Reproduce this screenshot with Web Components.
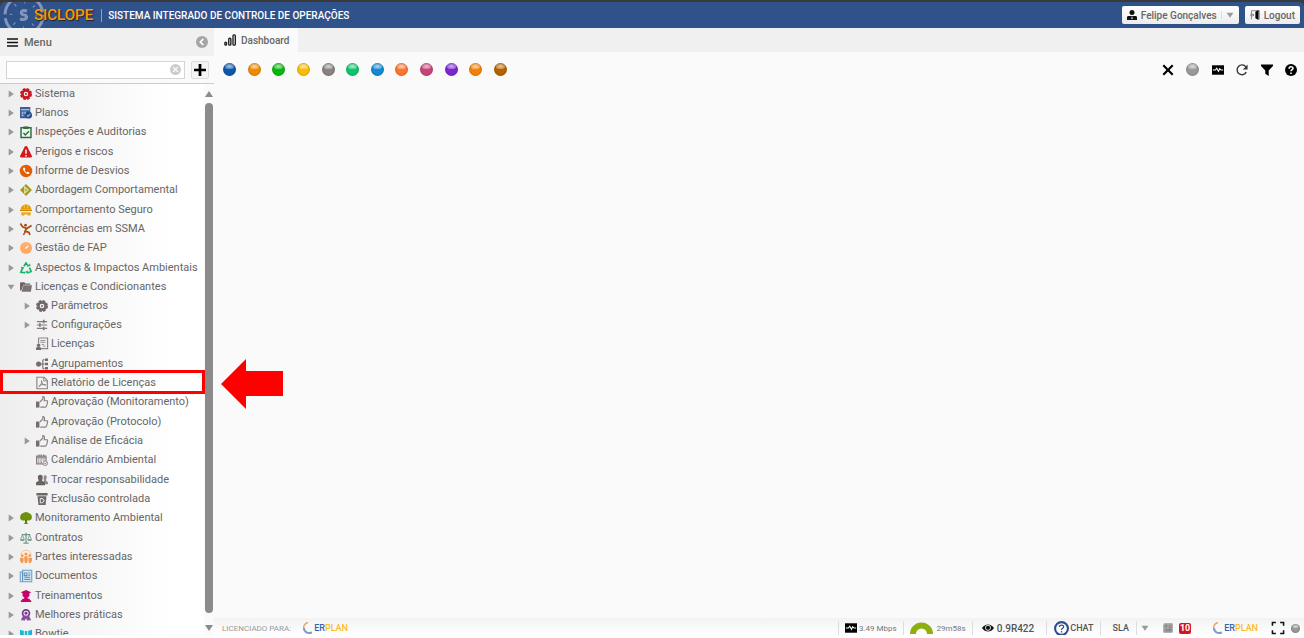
<!DOCTYPE html>
<html lang="pt-BR">
<head>
<meta charset="utf-8">
<title>SICLOPE</title>
<style>
  html, body { height: 100%; }
  body {
    margin: 0;
    font-family: Roboto, "Liberation Sans", sans-serif;
    font-size: 11px;
    color: #666;
    background: #fff;
  }
</style>
</head>
<body>
<app-shell></app-shell>

<script>
const icons = {
  menu: '<path d="M0 2.500h14M0 7h14M0 11.500h14" stroke="#111" stroke-width="2"/>',
  back: '<circle cx="7" cy="7" r="7" fill="#a5a5a5"/><path d="M8.500 3.500L5 7l3.500 3.500" fill="none" stroke="#fff" stroke-width="2"/>',
  clear: '<circle cx="7" cy="7" r="7" fill="#ccc"/><path d="M4 4l6 6M10 4l-6 6" stroke="#fff" stroke-width="1.500"/>',
  plus: '<path d="M7 0v14M0 7h14" stroke="#000" stroke-width="3.200"/>',
  chart: '<g fill="none" stroke="#222" stroke-width="1.600"><rect x="1" y="9.500" width="2" height="3.500" rx="1"/><rect x="5.500" y="5" width="2.500" height="8" rx="1"/><rect x="10.500" y="1" width="2.700" height="12" rx="1"/></g>',
  gear: '<circle cx="7" cy="7" r="4.200" fill="none" stroke="currentColor" stroke-width="3"/><circle cx="7" cy="7" r="6" fill="none" stroke="currentColor" stroke-width="2" stroke-dasharray="3.200 1.512"/><circle cx="7" cy="7" r="1.200" fill="currentColor"/>',
  plans: '<path d="M0 0h12v7H8v6H0z" fill="#3b5f96"/><path d="M1 3.200h10M2 6h2M5 6h2M2 8h2M5 8h2M2 10h2" stroke="#c9d8ee" stroke-width="1.200"/><circle cx="10" cy="9.500" r="4" fill="#274b86"/><path d="M8 9.500l1.500 1.500L12 8" fill="none" stroke="#9db8dd" stroke-width="1.200"/>',
  clipboard: '<path d="M1.200 2h11.600v11.300H1.200z" fill="#eef6ef" stroke="#2c6e3c" stroke-width="1.700"/><path d="M4 .5h6v3H4z" fill="#2c6e3c"/><path d="M4 8l2.200 2.500L10.500 6" fill="none" stroke="#2c6e3c" stroke-width="1.700"/>',
  danger: '<path d="M7 0c.8 0 1.200.5 1.500 1l5.300 10.500c.5 1 0 2-1.200 2H1.400c-1.200 0-1.700-1-1.200-2L5.500 1C5.800.5 6.200 0 7 0z" fill="#d0191b"/><path d="M7 4v5M7 10.500v1.700" stroke="#fff" stroke-width="1.700"/>',
  phone: '<circle cx="7" cy="7" r="7.300" fill="#e65c00"/><path d="M4 3.200c-1 1-.5 3 1.700 5.300S10 11 11 10l-.2-1.300-2-.8-1 .8C6.500 8 6 7.300 5.500 6.200l.8-.9-.8-2z" fill="#fff"/>',
  diamond: '<path d="M7 0l7 7-7 7-7-7z" fill="#a39a25"/><path d="M5.500 3.500v7l4-3.500z" fill="none" stroke="#e8e4b0" stroke-width="1.300"/>',
  helmet: '<path d="M1 6c0-3 2.500-5.500 6-5.500s6 2.500 6 5.500z" fill="#e39a00"/><path d="M0 6.500h14v1.700H0z" fill="#c98400"/><path d="M5 1v4M9 1v4" stroke="#f7cf75"/><path d="M1.500 9.500h11v3c-1 1.500-3.500 1.500-4.500-.5H6c-1 2-3.500 2-4.500.5z" fill="#eda91b"/>',
  fall: '<circle cx="6.500" cy="2.500" r="1.600" fill="#a84b0c"/><path d="M.5 .5l2.500 4 5 2L13.500 3M7.500 6L6 9.500l4.500 1.500 1 3" fill="none" stroke="#a84b0c" stroke-width="2"/><path d="M6.500 9.500L4 14" fill="none" stroke="#a84b0c" stroke-width="1.700"/>',
  gauge: '<circle cx="7" cy="7" r="7" fill="#ffaa67"/><path d="M6.500 7.500L9.500 4.500" stroke="#fff" stroke-width="1.500"/><path d="M3 4.500a5 5 0 0 1 8 0" fill="none" stroke="#ffd0a8" stroke-dasharray="1 1"/>',
  recycle: '<path d="M4.500 5L7 1.200 9.500 5M11 6.500l2 4.500-4 1.500M6 12.500l-5-.5 2-5" fill="none" stroke="#17b26a" stroke-width="2"/><path d="M8 5h4V1.800zM9 9.500v4.500l-3-2.200zM1 5.500l4 .7-2 3z" fill="#17b26a"/>',
  folder: '<path d="M0 3c0-1 .5-1.500 1.300-1.500H5L6.500 3H12v1.500H4L1.500 11H0z" fill="#6d6565"/><path d="M4 5h10l-1.300 7.500H1.800z" fill="#7b7272"/>',
  sliders: '<path d="M1 3h12M1 7h12M1 11h12" stroke="#837a7a" stroke-width="1.300"/><path d="M9 1v4M4.500 5v4M9 9v4" stroke="#837a7a" stroke-width="2"/>',
  license: '<path d="M3 0h10.500v12.500H6M3 0v6" fill="none" stroke="#8e8585" stroke-width="1.400"/><path d="M5 3h6M5 5h6M6.500 7.500h3" stroke="#8e8585"/><circle cx="3" cy="8.500" r="2" fill="#756c6c"/><path d="M0 14v-2.500l3-1.500 3 1.500V14z" fill="#756c6c"/><path d="M8 9.500h3" stroke="#8e8585"/>',
  group: '<circle cx="3" cy="7" r="3" fill="#756c6c"/><path d="M5 7h5M8 2v10.500M8 2h2M8 12.500h2" stroke="#756c6c" stroke-width="1.300" fill="none"/><path d="M10.500.5h3.500v3h-3.500zM10.500 5.500h3.500v3h-3.500zM10.500 10.500h3.500v3h-3.500z" fill="#756c6c"/>',
  pdf: '<path d="M1 .3h8.500L13.200 4v9.700H1z" fill="none" stroke="#8a8181" stroke-width="1.300"/><path d="M9 .5v4h4M3 11.500c3-1.500 4-5.500 3.500-7.500M6.500 4.500c0 3 2 5 5 5M3.500 10.500c2-1.500 5-2 8-1.500" fill="none" stroke="#8a8181" stroke-width="1.100"/>',
  thumb: '<path d="M0 6.500h4v7H0z" fill="#756c6c"/><path d="M4.500 7L8 3.500V.7c1.800 0 2.500 1.800 1.500 4.800H13c.7.500.7 1.500.2 2 .3.700.2 1.500-.4 2 .2.700 0 1.400-.6 1.800 0 1-.5 1.700-1.500 1.700H5" fill="none" stroke="#8a8181" stroke-width="1.300"/>',
  calendar: '<path d="M.7 2.500h11v9H.7z" fill="none" stroke="#857b7b" stroke-width="1.300"/><path d="M1 4.500h11M3.500.5v3M6 .5v3M9 .5v3M2 7h2M5 7h2M8 7h2M2 9.500h2M5 9.500h2" stroke="#857b7b" stroke-width="1.400"/><circle cx="10.800" cy="10.800" r="2.700" fill="#eee" stroke="#857b7b"/><path d="M9.500 10.800l1 1 1.700-2" stroke="#857b7b" fill="none"/>',
  people: '<path d="M9 2c2-1.500 4 0 3.500 2 0 1.500-.8 2-.8 3.500L14 9.500V12h-5z" fill="#948b8b"/><path d="M5 1c2 0 3 1.500 2.800 3.500C7.700 6.500 7 7 7 8l3.500 2v3H0v-3l3.200-2c0-1-.8-1.500-1-3.500C2 2.500 3 1 5 1z" fill="#6b6262"/>',
  trash: '<path d="M.5 0h13v2.800H.5zM1.800 3.800h10.400l-1 10.200H2.800z" fill="#6f6666"/><path d="M5 6.500h2.500L9.500 9l-2 2.500H5z" fill="none" stroke="#ddd" stroke-width="1.200"/>',
  tree: '<path d="M4 1l3-1 3 1 3 2 1 3-.7 2.500-2.300 1.500H8V12l1.500 2H4.500L6 12v-2H2.500L.5 8.500 0 6l1-3z" fill="#6b9208"/><path d="M6.200 9h1.600v4H6.200z" fill="#566b1d"/>',
  scale: '<path d="M7 1v12M4 13h6M2 3h10" stroke="#71978a" stroke-width="1.400"/><path d="M2.800 3.500L.6 9h4.400zM11.200 3.500L9 9h4.400z" fill="none" stroke="#71978a"/><path d="M0 9h5.500c-1 2-4.500 2-5.500 0zM8.500 9H14c-1 2-4.500 2-5.500 0z" fill="#71978a"/>',
  partners: '<path d="M1 5A6 6 0 0 1 13 5" fill="none" stroke="#f9bd85"/><g fill="#f79a4d"><circle cx="7" cy="3.500" r="1.800"/><circle cx="2.600" cy="5.500" r="1.600"/><circle cx="11.400" cy="5.500" r="1.600"/><path d="M5 6h4v4.500L8.300 14H5.700L5 10.500zM0 8h4.200v3.500L3.500 14h-2L0 11.500zM9.800 8H14v3.500L12.500 14h-2l-.7-2.500z"/></g>',
  docs: '<path d="M.3 2.300H3V.3h10.700v13.400H.3z" fill="#dbe8f3" stroke="#6d9dc5" stroke-width="1.200"/><path d="M3 2v11M5 3.500h3v3H5zM9.500 3.500H12M9.500 6H12M5 8.500h7M5 11h7" fill="none" stroke="#5f93bf" stroke-width="1.300"/>',
  trainee: '<path d="M1 2.500L7 0l6 2.500-2 1.200V7L9 8.700V10l2.500.5V12H13v2H1v-2h1.500v-1.500L5 10V8.700L3 7V3.700z" fill="#c9006b"/>',
  ribbon: '<circle cx="7" cy="5" r="4" fill="none" stroke="#78398c" stroke-width="2"/><circle cx="7" cy="5" r="1.700" fill="#78398c"/><path d="M3.500 8L1 13h3l1 1 2-3 2 3 1-1h3l-2.500-5z" fill="#8d4ca1"/>',
  bowtie: '<path d="M0 2l5 1.500h4L14 2v10L9 9H5l-5 3z" fill="#19b9d3"/><path d="M5 3v7M9 3v7" stroke="#fff"/>',
  user: '<circle cx="7" cy="3.500" r="3.500" fill="#111"/><path d="M0 14v-3.500c0-1.500 1-2 3-2h8c2 0 3 .5 3 2V14z" fill="#111"/><path d="M7 8.500L6 12l1 1 1-1z" fill="#fff"/>',
  door: '<path d="M2 13V1h11v12" fill="none" stroke="#777" stroke-width="1.200"/><path d="M7.500 2.500L12 0v14l-4.500-2.500z" fill="#000"/><path d="M0 7h5M3.500 5l2 2-2 2" fill="none" stroke="#555"/>',
  close: '<path d="M1.500 1.500l11 11M12.500 1.500l-11 11" stroke="#000" stroke-width="2.500"/>',
  monitor: '<path d="M0 1.500h14v11H0z" fill="#000"/><path d="M1 7h3l1.500-2 2 3.500L9 5.500 10.500 7H13" fill="none" stroke="#fff" stroke-width="1.200"/>',
  refresh: '<path d="M12 9.500A5.700 5.700 0 1 1 11.500 3.300" fill="none" stroke="#333" stroke-width="1.600"/><path d="M13.500.5v6H7.800l2.700-2.500z" fill="#333"/>',
  filter: '<path d="M0 .5h14v1.700L9 7.500V14L5 11.500v-4L0 2.200z" fill="#000"/>',
  help: '<circle cx="7" cy="7" r="7" fill="#000"/><path d="M4.800 5.500C4.800 2.500 9.500 2.600 9.300 5.300 9.200 6.700 7 6.600 7 8.600M7 9.800v1.800" fill="none" stroke="#fff" stroke-width="1.800"/>',
  eye: '<path d="M0 7c3.500-5.500 10.500-5.500 14 0-3.500 5.500-10.500 5.500-14 0z" fill="#111"/><circle cx="7" cy="6.800" r="3" fill="none" stroke="#fff"/>',
  chat: '<circle cx="7" cy="7" r="6" fill="#fff" stroke="#2d4f8b" stroke-width="2"/><path d="M5 5.500C5 3.200 9 3.200 9 5.400 9 6.800 7 6.700 7 8.300M7 9.300v1.500" fill="none" stroke="#2d4f8b" stroke-width="1.200"/>',
  news: '<path d="M2 1h11v12H1V3z" fill="#a9a9a9" stroke="#888"/><path d="M3 4h3M8 4h4M8 6.500h4M3 9h9M3 11h9M4.500 2.500V7" stroke="#6f6f6f"/>',
  expand: '<path d="M.5 4.500v-4h4M9.500.5h4v4M13.500 9.500v4h-4M4.500 13.500h-4v-4" fill="none" stroke="#111" stroke-width="1.800"/>',
  right: '<path d="M3 1l9 6-9 6z" fill="#999"/>',
  down: '<path d="M1 3h12L7 12z" fill="#999"/>'
};

class UiIcon extends HTMLElement {
  constructor() {
    super();
    this.attachShadow({ mode: 'open' });
  }

  connectedCallback() {
    this.shadowRoot.innerHTML = `
      <style>
        :host { display: block; flex: none; width: 12px; height: 12px; }
        svg { display: block; width: 100%; height: 100%; overflow: visible; }
      </style>
      <svg viewBox="0 0 14 14" aria-hidden="true">${icons[this.getAttribute('name')]}</svg>
    `;
  }
}
customElements.define('ui-icon', UiIcon);


class GlossyBall extends HTMLElement {
  constructor() {
    super();
    this.attachShadow({ mode: 'open' });
    this.shadowRoot.innerHTML = `
      <style>
        :host { display: block; flex: none; width: 13px; height: 13px; }
        div {
          height: 100%;
          border-radius: 50%;
          background:
            radial-gradient(ellipse 40% 24% at 50% 26%, rgba(255,255,255,.65), rgba(255,255,255,.25) 90%, transparent),
            var(--ball, #999);
          box-shadow: inset 0 0 2px rgba(0,0,0,.4);
        }
      </style>
      <div></div>
    `;
  }
}
customElements.define('glossy-ball', GlossyBall);


class ErplanLogo extends HTMLElement {
  constructor() {
    super();
    this.attachShadow({ mode: 'open' });
    this.shadowRoot.innerHTML = `
      <style>
        :host { display: flex; align-items: center; gap: 1px; font-size: 9px; font-weight: 500; color: #3566a8; }
        svg { width: 10px; height: 12px; }
        b { font-weight: 500; color: #f8bd2c; }
      </style>
      <svg viewBox="0 0 10 12" aria-hidden="true">
        <path d="M5 .5C1 1.500 0 5 1 8" fill="none" stroke="#f3a45d" stroke-width="1.500"/>
        <path d="M1 6c0 4 4 6 8 4.500" fill="none" stroke="#7d9cc9" stroke-width="2"/>
      </svg>
      <span>ER<b>PLAN</b></span>
    `;
  }
}
customElements.define('erplan-logo', ErplanLogo);


class AppHeader extends HTMLElement {
  constructor() {
    super();
    this.attachShadow({ mode: 'open' });
    this.shadowRoot.innerHTML = `
      <style>
        :host { display: block; background: #3a3a3a; padding-top: 2px; }
        header {
          display: flex;
          align-items: center;
          height: 26px;
          padding-right: 4px;
          background: #30528a;
          border-radius: 5px 5px 0 0;
          overflow: hidden;
        }
        .emblem { flex: none; width: 44px; height: 44px; }
        h1 {
          margin: 0 0 0 -10px;
          font-size: 15px;
          font-weight: 500;
          color: #ff9800;
          text-shadow: 1px 1px 1px #222;
        }
        .name {
          flex: 1;
          margin-left: 8px;
          padding: 1px 0 0 6px;
          border-left: 1px solid #8fa1c0;
          font-size: 10px;
          line-height: 12px;
          font-weight: 500;
          color: #fff;
        }
        .actions { display: flex; gap: 6px; }
        button {
          display: flex;
          align-items: center;
          gap: 4px;
          height: 18px;
          padding: 0 5px;
          border: 0;
          border-radius: 2px;
          background: linear-gradient(#fff, #ececec);
          font: 500 10px Roboto, sans-serif;
          color: #666;
        }
        ui-icon { width: 10px; height: 10px; }
        .more { width: 8px; height: 8px; padding-left: 4px; border-left: 1px solid #ddd; }
      </style>
      <header>
        <svg class="emblem" viewBox="0 0 44 44" aria-hidden="true">
          <g fill="none" stroke="#8396b9">
            <circle cx="24" cy="22" r="19" stroke-width="3" stroke-dasharray="26 4"/>
            <circle cx="24" cy="22" r="13" stroke-width="3" stroke-dasharray="1 9.200"/>
            <path d="M27 18c-7-2-7 4-3 4s4 6-4 4" stroke-width="3"/>
          </g>
        </svg>
        <h1>SICLOPE</h1>
        <div class="name">SISTEMA INTEGRADO DE CONTROLE DE OPERAÇÕES</div>
        <div class="actions">
          <button><ui-icon name="user"></ui-icon>Felipe Gonçalves<ui-icon class="more" name="down"></ui-icon></button>
          <button><ui-icon name="door"></ui-icon>Logout</button>
        </div>
      </header>
    `;
  }
}
customElements.define('app-header', AppHeader);


class TreeItem extends HTMLElement {
  constructor() {
    super();
    this.attachShadow({ mode: 'open' });
  }

  connectedCallback() {
    const leaf = this.hasAttribute('leaf');
    const open = this.hasAttribute('open');
    this.shadowRoot.innerHTML = `
      <style>
        :host { display: block; }
        .row {
          position: relative;
          display: flex;
          align-items: center;
          height: 19px;
          padding-left: calc(7px + var(--indent, 0px));
        }
        button { width: 8px; height: 8px; padding: 0; border: 0; background: none; }
        button ui-icon { width: 8px; height: 8px; }
        .spacer { width: 8px; }
        a {
          display: flex;
          gap: 3px;
          margin-left: 5px;
          line-height: 19px;
          color: inherit;
          text-decoration: none;
          white-space: nowrap;
        }
        a ui-icon { margin-top: 4px; color: var(--tint); }
        .children { --indent: 16px; }
        .mark { position: absolute; inset: -3px -1px -2px 0; border: 3px solid #f00; }
        .pointer { position: absolute; left: calc(100% + 17px); top: -14px; width: 62px; height: 50px; }
      </style>
      <div class="row">
        ${leaf ? '<span class="spacer"></span>' : `<button aria-label="Expandir"><ui-icon name="${open ? 'down' : 'right'}"></ui-icon></button>`}
        <a href="#"><ui-icon name="${this.getAttribute('icon')}"></ui-icon><span>${this.getAttribute('label')}</span></a>
        ${this.hasAttribute('marked') ? `
          <div class="mark"></div>
          <svg class="pointer" viewBox="0 0 62 50" aria-hidden="true"><path d="M0 25L25 0v12h37v25H25v13z" fill="#f00"/></svg>` : ''}
      </div>
      <div class="children"><slot></slot></div>
    `;
  }
}
customElements.define('tree-item', TreeItem);


class SideMenu extends HTMLElement {
  constructor() {
    super();
    this.attachShadow({ mode: 'open' });
    this.shadowRoot.innerHTML = `
      <style>
        :host {
          position: relative;
          z-index: 1;
          display: flex;
          flex-direction: column;
          width: 214px;
          min-height: 0;
          box-sizing: border-box;
        }
        .title {
          display: flex;
          align-items: center;
          gap: 6px;
          height: 28px;
          padding: 0 6px 0 7px;
          background: #f0f0f0;
          font-size: 11px;
          font-weight: 500;
        }
        .title span { flex: 1; }
        .title ui-icon { width: 11px; height: 11px; }
        .title button { padding: 0; border: 0; background: none; }
        .title button ui-icon { width: 12px; height: 12px; }
        .search {
          display: flex;
          align-items: center;
          gap: 6px;
          height: 27px;
          padding: 0 5px 0 6px;
          background: #fafafa;
          border-bottom: 1px solid #ccc;
        }
        .field {
          flex: 1;
          display: flex;
          align-items: center;
          height: 16px;
          padding-right: 3px;
          border: 1px solid #d5d5d5;
          background: #fff;
        }
        input { flex: 1; min-width: 0; height: 14px; padding: 0 3px; border: 0; outline: 0; font: inherit; background: none; }
        .field ui-icon { width: 11px; height: 11px; }
        .add {
          display: flex;
          align-items: center;
          justify-content: center;
          width: 18px;
          height: 18px;
          padding: 0;
          border: 1px solid #ddd;
          border-radius: 2px;
          background: #f4f4f4;
        }
        .body {
          flex: 1;
          display: flex;
          min-height: 0;
          background: linear-gradient(90deg, #eee, #fff 80%);
        }
        nav { flex: 1; overflow-y: clip; min-width: 0; }
        tree-item:nth-child(3n) { margin-bottom: 1px; }
        .scroll {
          display: flex;
          flex-direction: column;
          align-items: center;
          gap: 4px;
          width: 10px;
          padding: 5px 0 2px;
          background: #fafafa;
        }
        .scroll svg { flex: none; width: 8px; height: 10px; }
        .thumb { flex: 1; width: 8px; margin-bottom: 6px; border-radius: 4px; background: #8b8b8b; }
      </style>
      <div class="title">
        <ui-icon name="menu"></ui-icon><span>Menu</span>
        <button aria-label="Recolher menu"><ui-icon name="back"></ui-icon></button>
      </div>
      <div class="search">
        <div class="field">
          <input type="text" aria-label="Pesquisar no menu">
          <ui-icon name="clear"></ui-icon>
        </div>
        <button class="add" aria-label="Adicionar"><ui-icon name="plus"></ui-icon></button>
      </div>
      <div class="body">
        <nav>
          <tree-item label="Sistema" icon="gear" style="--tint:#c8171e"></tree-item>
          <tree-item label="Planos" icon="plans"></tree-item>
          <tree-item label="Inspeções e Auditorias" icon="clipboard"></tree-item>
          <tree-item label="Perigos e riscos" icon="danger"></tree-item>
          <tree-item label="Informe de Desvios" icon="phone"></tree-item>
          <tree-item label="Abordagem Comportamental" icon="diamond"></tree-item>
          <tree-item label="Comportamento Seguro" icon="helmet"></tree-item>
          <tree-item label="Ocorrências em SSMA" icon="fall"></tree-item>
          <tree-item label="Gestão de FAP" icon="gauge"></tree-item>
          <tree-item label="Aspectos &amp; Impactos Ambientais" icon="recycle"></tree-item>
          <tree-item label="Licenças e Condicionantes" icon="folder" open>
            <tree-item label="Parâmetros" icon="gear" style="--tint:#6f6666"></tree-item>
            <tree-item label="Configurações" icon="sliders"></tree-item>
            <tree-item label="Licenças" icon="license" leaf></tree-item>
            <tree-item label="Agrupamentos" icon="group" leaf></tree-item>
            <tree-item label="Relatório de Licenças" icon="pdf" leaf marked></tree-item>
            <tree-item label="Aprovação (Monitoramento)" icon="thumb" leaf></tree-item>
            <tree-item label="Aprovação (Protocolo)" icon="thumb" leaf></tree-item>
            <tree-item label="Análise de Eficácia" icon="thumb"></tree-item>
            <tree-item label="Calendário Ambiental" icon="calendar" leaf></tree-item>
            <tree-item label="Trocar responsabilidade" icon="people" leaf></tree-item>
            <tree-item label="Exclusão controlada" icon="trash" leaf></tree-item>
          </tree-item>
          <tree-item label="Monitoramento Ambiental" icon="tree"></tree-item>
          <tree-item label="Contratos" icon="scale"></tree-item>
          <tree-item label="Partes interessadas" icon="partners"></tree-item>
          <tree-item label="Documentos" icon="docs"></tree-item>
          <tree-item label="Treinamentos" icon="trainee"></tree-item>
          <tree-item label="Melhores práticas" icon="ribbon"></tree-item>
          <tree-item label="Bowtie" icon="bowtie"></tree-item>
        </nav>
        <div class="scroll">
          <svg viewBox="0 0 8 10" aria-hidden="true"><path d="M4 2l4 6H0z" fill="#8b8b8b"/></svg>
          <div class="thumb"></div>
          <svg viewBox="0 0 8 10" aria-hidden="true"><path d="M4 8l4-6H0z" fill="#8b8b8b"/></svg>
        </div>
      </div>
    `;
  }
}
customElements.define('side-menu', SideMenu);


class DashboardPanel extends HTMLElement {
  constructor() {
    super();
    this.attachShadow({ mode: 'open' });
    const colors = ['#0d57ab', '#f08a00', '#09b80d', '#fbbd05', '#8b8282', '#0fc46f',
      '#1488d0', '#fb7430', '#c54579', '#7a27d2', '#f58207', '#b56300'];
    this.shadowRoot.innerHTML = `
      <style>
        :host { flex: 1; display: flex; flex-direction: column; min-width: 0; background: #fafafa; }
        .tabs { display: flex; height: 24px; background: #f0f0f0; }
        .tab {
          display: flex;
          align-items: center;
          gap: 5px;
          padding: 0 9px 0 10px;
          border: 0;
          background: #fafafa;
          font: 500 10px Roboto, sans-serif;
          color: #666;
        }
        .toolbar { display: flex; justify-content: space-between; align-items: center; height: 35px; padding: 0 7px 0 9px; }
        .balls, .tools { display: flex; align-items: center; justify-content: space-between; }
        .balls { width: 284px; }
        .tools { width: 135px; }
        button.tool { padding: 0; border: 0; background: none; }
      </style>
      <div class="tabs" role="tablist">
        <button class="tab" role="tab" aria-selected="true"><ui-icon name="chart"></ui-icon>Dashboard</button>
      </div>
      <div class="toolbar">
        <div class="balls">
          ${colors.map(c => `<button class="tool" aria-label="Painel"><glossy-ball style="--ball:${c}"></glossy-ball></button>`).join('')}
        </div>
        <div class="tools">
          <button class="tool" aria-label="Fechar"><ui-icon name="close"></ui-icon></button>
          <button class="tool" aria-label="Estado"><glossy-ball></glossy-ball></button>
          <button class="tool" aria-label="Monitor"><ui-icon name="monitor"></ui-icon></button>
          <button class="tool" aria-label="Atualizar"><ui-icon name="refresh"></ui-icon></button>
          <button class="tool" aria-label="Filtrar"><ui-icon name="filter"></ui-icon></button>
          <button class="tool" aria-label="Ajuda"><ui-icon name="help"></ui-icon></button>
        </div>
      </div>
      <slot></slot>
    `;
  }
}
customElements.define('dashboard-panel', DashboardPanel);


class StatusBar extends HTMLElement {
  constructor() {
    super();
    this.attachShadow({ mode: 'open' });
    this.shadowRoot.innerHTML = `
      <style>
        :host {
          display: flex;
          align-items: center;
          height: 14px;
          margin-top: auto;
          padding: 3px 4px 0 8px;
          background: linear-gradient(#f2f2f2, #fff);
          font-size: 8px;
          color: #777;
          overflow: hidden;
        }
        .owner { flex: 1; display: flex; align-items: center; gap: 12px; color: #999; }
        .cell {
          display: flex;
          align-items: center;
          gap: 2px;
          height: 14px;
          padding: 0 6px;
          border-left: 1px solid #ddd;
          white-space: nowrap;
        }
        .strong { font-size: 10px; font-weight: 500; color: #555; }
        .eye { gap: 3px; padding: 0 12px 0 9px; }
        .chat { gap: 1px; padding: 0 6px 0 7px; font-size: 9px; }
        .chat ui-icon { width: 15px; height: 15px; }
        .sla { padding: 0 7px 0 12px; font-size: 9px; }
        .gauge { width: 23px; height: 12px; }
        .timer { gap: 4px; }
        .extras { display: flex; align-items: center; }
        .extras > * { margin-left: 14px; }
        .more { padding: 0 0 0 4px; }
        .more ui-icon { width: 8px; height: 8px; }
        .news { width: 10px; height: 10px; }
        .extras .badge {
          margin: 0 8px 0 6px;
          padding: 0 1px;
          border-radius: 2px;
          background: #d4161c;
          color: #fff;
          font-size: 9px;
          line-height: 11px;
          font-weight: 700;
        }
        .extras glossy-ball { width: 9px; height: 9px; margin-left: 7px; }
      </style>
      <div class="owner"><span>LICENCIADO PARA:</span><erplan-logo></erplan-logo></div>
      <div class="cell"><ui-icon name="monitor"></ui-icon><span>3.49 Mbps</span></div>
      <div class="cell timer">
        <svg class="gauge" viewBox="0 0 23 12" aria-hidden="true"><path d="M3 12a8 8 0 0 1 17 0" fill="none" stroke="#8fae0f" stroke-width="6"/></svg>
        <span>29m58s</span>
      </div>
      <div class="cell strong eye"><ui-icon name="eye"></ui-icon><span>0.9R422</span></div>
      <div class="cell strong chat"><ui-icon name="chat"></ui-icon><span>CHAT</span></div>
      <div class="cell strong sla">SLA</div>
      <div class="cell more"><ui-icon name="down"></ui-icon></div>
      <div class="extras">
        <ui-icon class="news" name="news"></ui-icon>
        <span class="badge">10</span>
        <erplan-logo></erplan-logo>
        <ui-icon name="expand"></ui-icon>
        <glossy-ball></glossy-ball>
      </div>
    `;
  }
}
customElements.define('status-bar', StatusBar);


class AppShell extends HTMLElement {
  constructor() {
    super();
    this.attachShadow({ mode: 'open' });
    this.shadowRoot.innerHTML = `
      <style>
        :host {
          display: flex;
          flex-direction: column;
          box-sizing: border-box;
          height: 100vh;
          padding-bottom: 3px;
          overflow: hidden;
        }
        main { flex: 1; display: flex; min-height: 0; }
      </style>
      <app-header></app-header>
      <main>
        <side-menu></side-menu>
        <dashboard-panel><status-bar></status-bar></dashboard-panel>
      </main>
    `;
  }
}
customElements.define('app-shell', AppShell);
</script>
</body>
</html>
